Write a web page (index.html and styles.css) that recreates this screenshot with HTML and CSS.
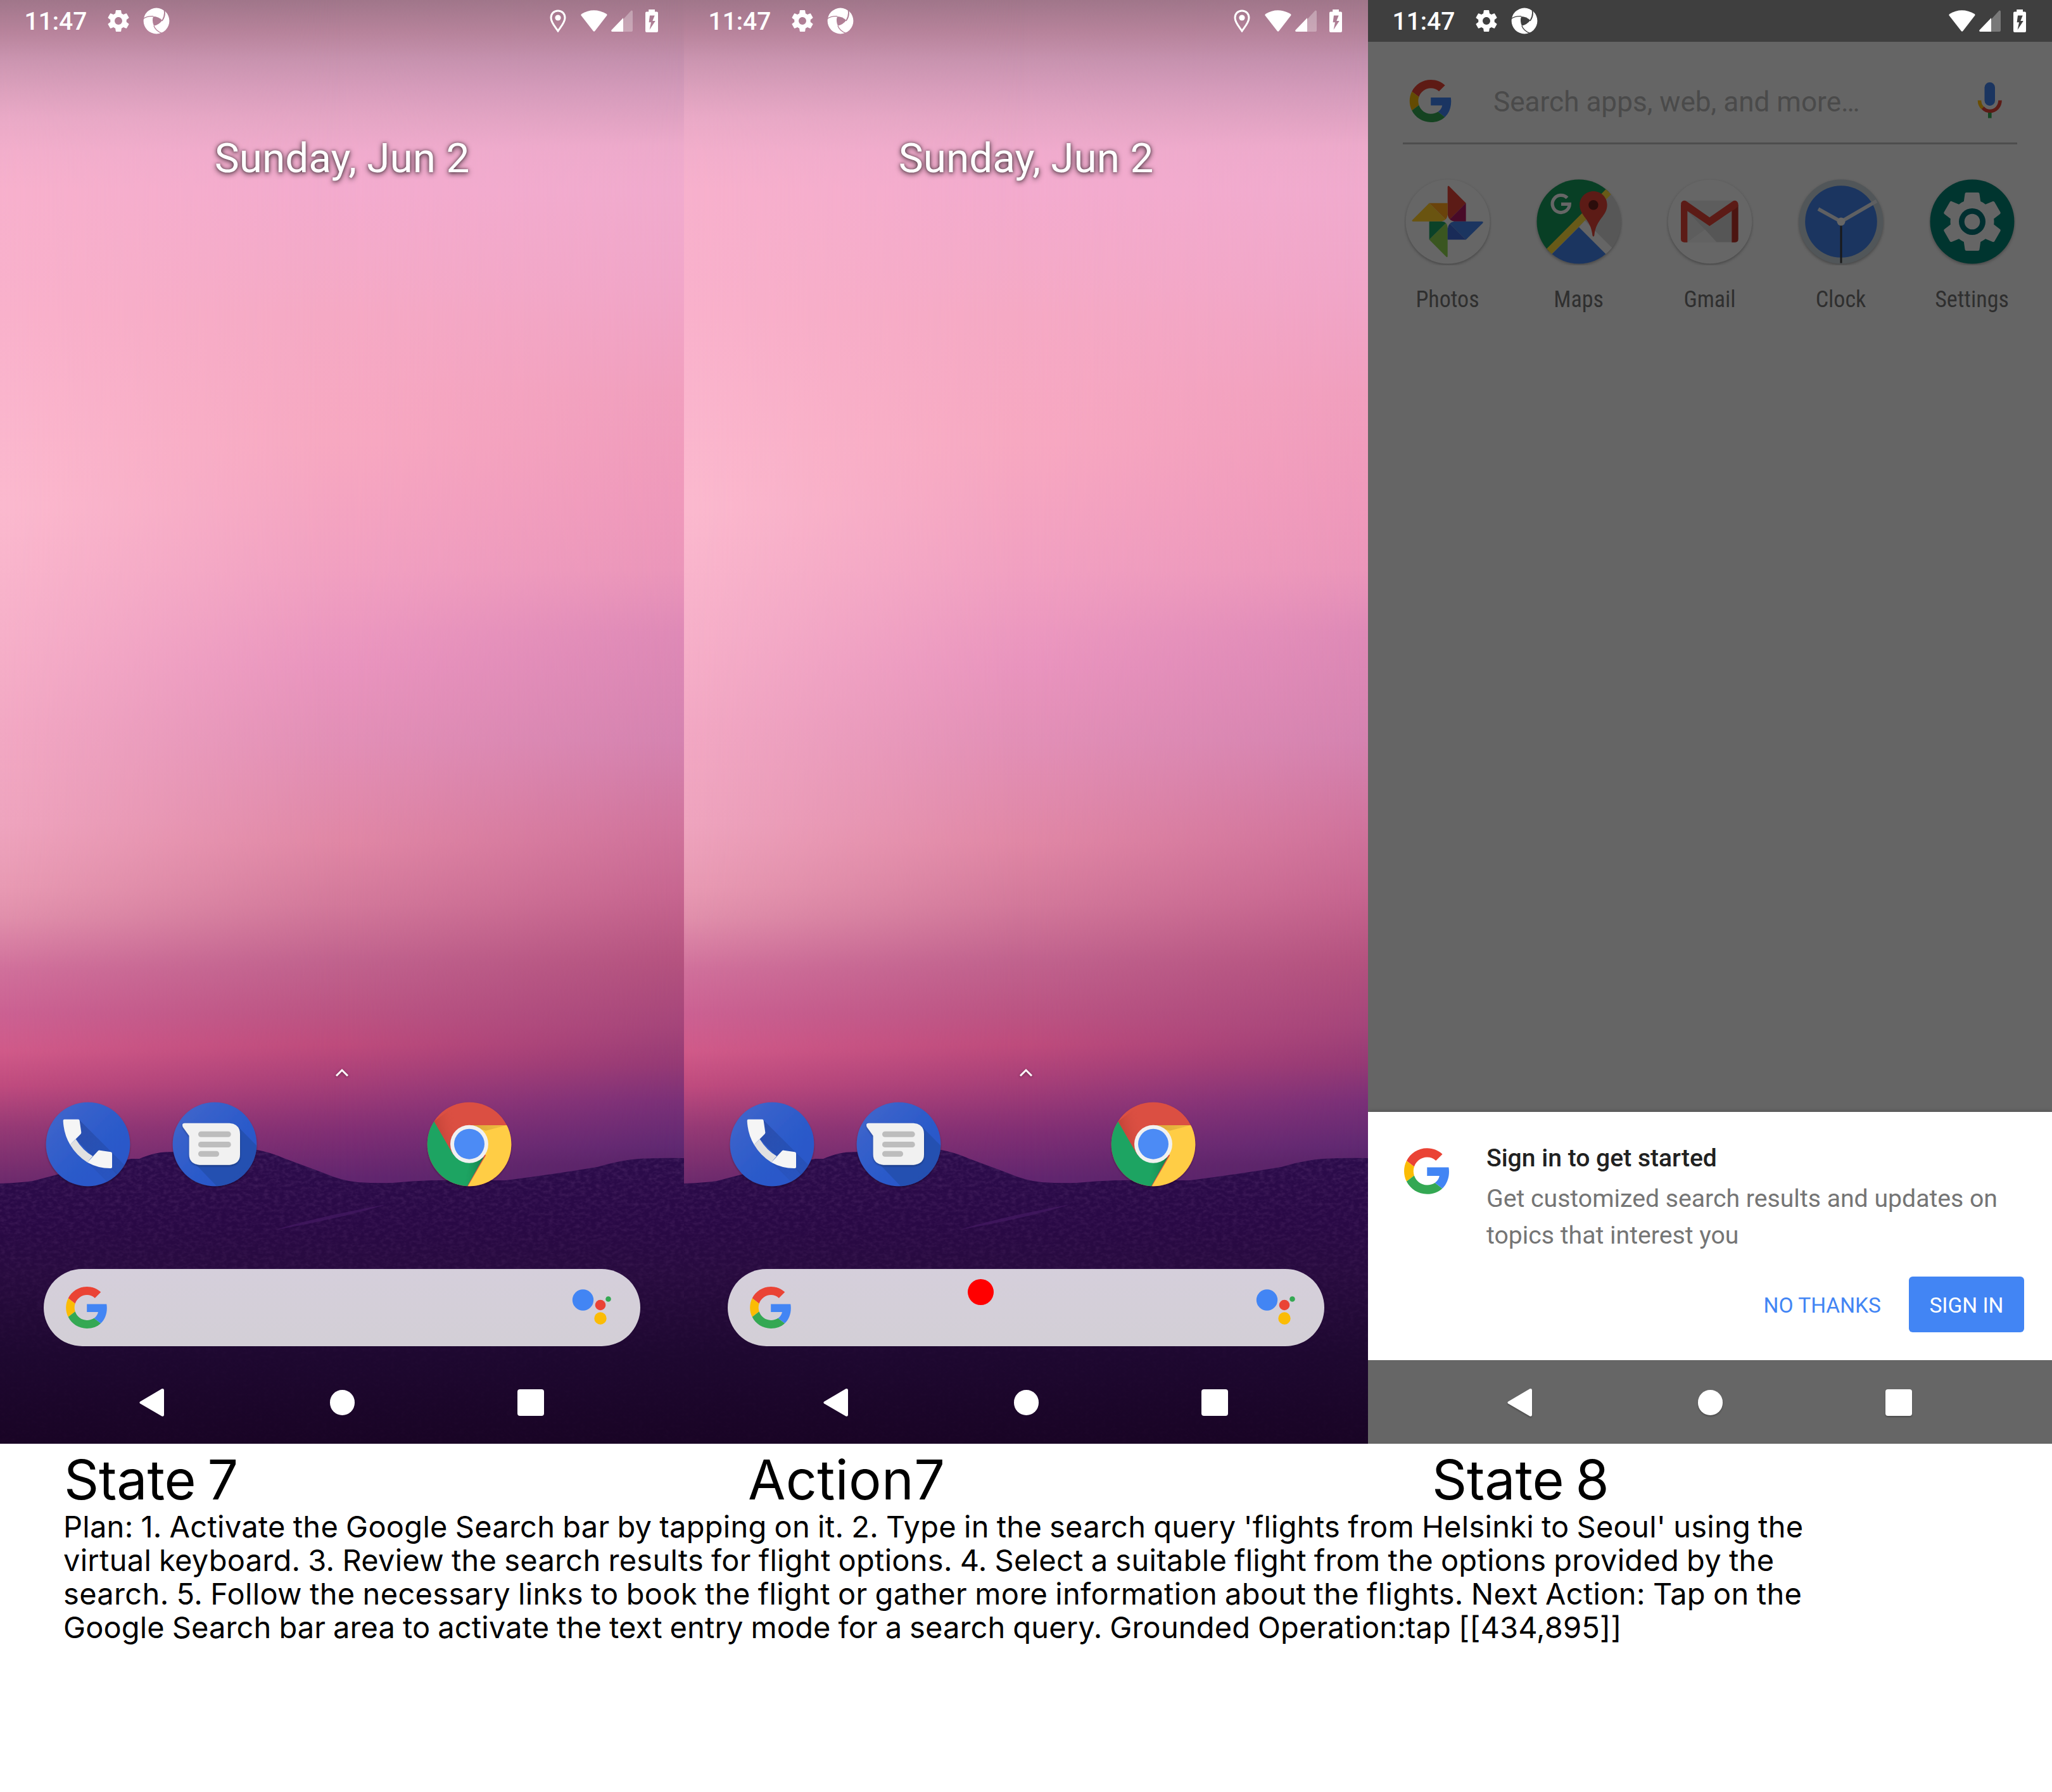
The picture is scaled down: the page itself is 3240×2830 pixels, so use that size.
FILE: index.html
```html
<!DOCTYPE html>
<html lang="en">
<head>
<meta charset="utf-8">
<title>State 7 – State 8</title>
<link rel="stylesheet" href="styles.css">
</head>
<body>
<svg class="defs" width="0" height="0" aria-hidden="true">
  <defs>
    <symbol id="google" viewBox="0 0 47 48">
      <path fill="#EA4335" d="M24 9.5c3.54 0 6.71 1.22 9.21 3.6l6.85-6.85C35.9 2.38 30.47 0 24 0 14.62 0 6.51 5.38 2.56 13.22l7.98 6.19C12.43 13.72 17.74 9.5 24 9.5z"/>
      <path fill="#4285F4" d="M46.98 24.55c0-1.57-.15-3.09-.38-4.55H24v9.02h12.94c-.58 2.96-2.26 5.48-4.78 7.18l7.73 6c4.51-4.18 7.09-10.36 7.09-17.65z"/>
      <path fill="#FBBC05" d="M10.53 28.59c-.48-1.45-.76-2.99-.76-4.59s.27-3.14.76-4.59l-7.98-6.19C.92 16.46 0 20.12 0 24c0 3.88.92 7.54 2.56 10.78l7.97-6.19z"/>
      <path fill="#34A853" d="M24 48c6.48 0 11.93-2.13 15.89-5.81l-7.73-6c-2.15 1.45-4.92 2.3-8.16 2.3-6.26 0-11.57-4.22-13.47-9.91l-7.98 6.19C6.51 42.62 14.62 48 24 48z"/>
    </symbol>
    <symbol id="gear" viewBox="2 2 20 20">
      <path d="M19.43 12.98c.04-.32.07-.64.07-.98s-.03-.66-.07-.98l2.11-1.65c.19-.15.24-.42.12-.64l-2-3.46c-.12-.22-.39-.3-.61-.22l-2.49 1c-.52-.4-1.08-.73-1.69-.98l-.38-2.65C14.46 2.18 14.25 2 14 2h-4c-.25 0-.46.18-.49.42l-.38 2.65c-.61.25-1.17.59-1.69.98l-2.49-1c-.23-.09-.49 0-.61.22l-2 3.46c-.13.22-.07.49.12.64l2.11 1.65c-.04.32-.07.65-.07.98s.03.66.07.98l-2.11 1.65c-.19.15-.24.42-.12.64l2 3.46c.12.22.39.3.61.22l2.49-1c.52.4 1.08.73 1.69.98l.38 2.65c.03.24.24.42.49.42h4c.25 0 .46-.18.49-.42l.38-2.65c.61-.25 1.17-.59 1.69-.98l2.49 1c.23.09.49 0 .61-.22l2-3.46c.12-.22.07-.49-.12-.64l-2.11-1.65zM12 15.5c-1.93 0-3.5-1.57-3.5-3.5s1.57-3.5 3.5-3.5 3.5 1.57 3.5 3.5-1.57 3.5-3.5 3.5z"/>
    </symbol>
    <mask id="swirlCut" maskUnits="userSpaceOnUse" x="-22" y="-22" width="44" height="44">
      <rect x="-22" y="-22" width="44" height="44" fill="#fff"/>
      <path fill="#000" d="M-5-7Q3-7 9.3-1Q4 6-4.1 7.7Q-7.5 0-5-7Z"/>
      <path fill="none" stroke="#000" stroke-width="1.3" d="M-21-3.2Q-15-8-5-7.4M12.2-17Q14-9 9.3-1M9 19.6Q-1 16-4.1 7.7M12.5-17.5Q15-8 9 0"/>
    </mask>
    <symbol id="swirl" viewBox="-21 -21 42 42">
      <circle r="20.4" fill="#fff" mask="url(#swirlCut)"/>
    </symbol>
    <symbol id="pin" viewBox="0 0 26 36">
      <path fill="none" stroke="#fff" stroke-width="3" d="M13 2C6.5 2 2 6.8 2 13c0 8 8 16 11 21 3-5 11-13 11-21C24 6.800 19.500 2 13 2z"/>
      <circle cx="13" cy="13" r="4.600" fill="#fff"/>
    </symbol>
    <symbol id="wifi" viewBox="0 0 42 34">
      <path fill="#fff" d="M.6 8.500Q0 7 1.300 6Q20.500-5.500 40.700 6Q42 7 41.200 8.500L22.500 32.800Q21 34.500 19.500 32.800Z"/>
    </symbol>
    <symbol id="signal" viewBox="0 0 34 34">
      <path fill="#fff" fill-opacity=".3" d="M19 14.500 31.500.7Q34 0 34 2.500V32q0 2-2 2H19z"/>
      <path fill="#fff" d="M19 12.300V34H1.500Q-.5 33.500.5 31.500z"/>
    </symbol>
    <symbol id="battery" viewBox="0 0 20 36">
      <path fill="#fff" fill-rule="evenodd" d="M5.200 0h9.800v3.400h3q2 0 2 2V34q0 2-2 2H2q-2 0-2-2V5.400q0-2 2-2h3.200zM7 9.500 5.600 20.300H9L6.600 32 15.800 18H11.300L14.700 9.500z"/>
    </symbol>
    <symbol id="assistant" viewBox="0 0 64 60">
      <circle cx="17.500" cy="18" r="16.700" fill="#4285F4"/>
      <circle cx="45" cy="26" r="8.300" fill="#EA4335"/>
      <circle cx="57.500" cy="16.500" r="4.300" fill="#34A853"/>
      <circle cx="45" cy="47" r="9.700" fill="#FBBC05"/>
    </symbol>
    <symbol id="navBack" viewBox="0 0 40 46">
      <path fill="#fff" d="M1.200 21.500 35.500 1.200Q39 0 39 3.500V42Q39 45.500 35.500 44.500L1.200 24.500Q-.5 23 1.200 21.500z"/>
    </symbol>

    <linearGradient id="blueDisc" x1="0" y1="0" x2="1" y2="1">
      <stop offset="0" stop-color="#4468cb"/><stop offset=".5" stop-color="#2d5bca"/><stop offset="1" stop-color="#2756c8"/>
    </linearGradient>
    <linearGradient id="longShade" x1="0" y1="0" x2="1" y2="1">
      <stop offset="0" stop-color="#234196" stop-opacity=".55"/><stop offset="1" stop-color="#234da8" stop-opacity=".25"/>
    </linearGradient>
    <filter id="drop" x="-20%" y="-20%" width="140%" height="150%">
      <feDropShadow dx="0" dy="5" stdDeviation="5" flood-color="#000" flood-opacity=".3"/>
    </filter>
    <clipPath id="phoneDisc"><circle cx="230" cy="232" r="199"/></clipPath>
    <clipPath id="msgDisc"><circle cx="832" cy="232" r="199"/></clipPath>
    <clipPath id="chromeDisc"><circle cx="232" cy="232" r="199"/></clipPath>
    <clipPath id="mapDisc"><circle r="66.500"/></clipPath>

    <symbol id="phoneApp" viewBox="23 25 414 414">
      <circle cx="230" cy="232" r="199" fill="url(#blueDisc)" filter="url(#drop)"/>
      <g clip-path="url(#phoneDisc)">
        <path fill="url(#longShade)" d="M190 118 520 448V560L340 345 250 288 172 208 197 182z" />
        <path fill="url(#longShade)" opacity=".5" d="M228 318 400 490 480 480 343 345z"/>
      </g>
      <path fill="#e1e1e1" d="M145 234Q175 285 227 318L252 288Q205 262 172 208z"/>
      <path fill="#f5f5f5" d="M118 114H184Q189 114 190 120L198 176Q198 181 195 184L145 234Q115 185 112 120Q112 114 118 114z"/>
      <path fill="#f5f5f5" d="M278 263Q281 260 286 261L338 269Q344 270 344 276V341Q344 346 338 346Q280 347 227 318z"/>
    </symbol>
    <symbol id="messagesApp" viewBox="625 25 414 414">
      <circle cx="832" cy="232" r="199" fill="url(#blueDisc)" filter="url(#drop)"/>
      <g clip-path="url(#msgDisc)"><path fill="#234da8" opacity=".75" d="M938 145 1060 268V450H860L735 320z"/></g>
      <path fill="#f1f1f1" filter="url(#drop)" d="M690 132H902Q952 136 952 184V280Q952 325 902 330H760Q711 325 711 280V192L681 150Q674 132 690 132z"/>
      <g fill="#bdbdbd"><rect x="754" y="171" width="155" height="27" rx="13"/><rect x="754" y="220" width="155" height="27" rx="13"/><rect x="754" y="264" width="99" height="27" rx="13"/></g>
    </symbol>
    <symbol id="chromeApp" viewBox="25 25 414 414">
      <circle cx="232" cy="232" r="199" fill="#db5043" filter="url(#drop)"/>
      <g clip-path="url(#chromeDisc)">
        <path fill="url(#redShade)" d="M65 124 147 270 160 170 200 142 150 60z"/>
        <path fill="#ffcd45" d="M232 142H440V440H220L310 285z"/>
        <path fill="url(#yellowShade)" d="M232 142H410L310 168z"/>
        <path fill="#1da462" d="M65 124 155 280 232 320 300 293 220 435H20V124z"/>
        <path fill="url(#greenShade)" d="M300 293 220 435 200 440 235 318z"/>
      </g>
      <circle cx="232" cy="231" r="90" fill="#f1f1f1"/>
      <circle cx="232" cy="231" r="72" fill="#4c8bf5"/>
    </symbol>
    <linearGradient id="redShade" x1="0" y1=".6" x2=".8" y2=".3"><stop offset="0" stop-color="#b03a30" stop-opacity=".75"/><stop offset="1" stop-color="#db5043" stop-opacity="0"/></linearGradient>
    <linearGradient id="yellowShade"><stop offset="0" stop-color="#d9a63a"/><stop offset="1" stop-color="#f2c040"/></linearGradient>
    <linearGradient id="greenShade"><stop offset="0" stop-color="#1da462" stop-opacity="0"/><stop offset="1" stop-color="#127a48"/></linearGradient>
    <filter id="grain" x="0" y="0" width="100%" height="100%">
      <feTurbulence type="fractalNoise" baseFrequency=".12 .2" numOctaves="3" seed="4"/>
      <feColorMatrix values="0 0 0 0 .32  0 0 0 0 .14  0 0 0 0 .38  1.600 0 0 0 -.62"/>
      <feComposite in2="SourceGraphic" operator="in"/>
    </filter>
    <linearGradient id="hillFill" x1="0" y1="1815" x2="0" y2="2280" gradientUnits="userSpaceOnUse">
      <stop offset="0" stop-color="#2c0c4c"/><stop offset=".25" stop-color="#290945"/><stop offset=".42" stop-color="#280b3f"/>
      <stop offset=".7" stop-color="#1e0830"/><stop offset="1" stop-color="#190425"/>
    </linearGradient>
    <linearGradient id="grainFade" x1="0" y1="1815" x2="0" y2="2150" gradientUnits="userSpaceOnUse">
      <stop offset="0" stop-color="#fff"/><stop offset=".45" stop-color="#fff" stop-opacity=".6"/><stop offset="1" stop-color="#fff" stop-opacity=".1"/>
    </linearGradient>
    <symbol id="hills" viewBox="0 1800 1080 480">
      <path fill="url(#hillFill)" d="M0 1869Q30 1868 52 1865Q75 1859 90 1855L207 1830H220Q236 1823 251 1820.500Q260 1819 272 1819Q340 1812 406 1816Q428 1820 448 1829L510 1852Q540 1865 565 1867Q595 1869 620 1868Q650 1865 682 1864L799 1864Q870 1855 943 1843Q980 1832 1009 1830Q1045 1828 1080 1829V2280H0z"/>
      <path fill="url(#grainFade)" filter="url(#grain)" opacity=".26" d="M0 1869Q30 1868 52 1865Q75 1859 90 1855L207 1830H220Q236 1823 251 1820.500Q260 1819 272 1819Q340 1812 406 1816Q428 1820 448 1829L510 1852Q540 1865 565 1867Q595 1869 620 1868Q650 1865 682 1864L799 1864Q870 1855 943 1843Q980 1832 1009 1830Q1045 1828 1080 1829V2280H0z"/>
      <path fill="#451a63" opacity=".7" d="M435 1942Q500 1922 610 1902Q540 1924 435 1942z"/>
    </symbol>
  </defs>
</svg>

<main class="sheet">
  <section class="screens">
    <article class="phone home">
      <div class="sky sky-right"></div><div class="sky sky-mid"></div><div class="sky sky-left"></div>
      <svg class="hills"><use href="#hills"/></svg>
      <div class="ui">
        <header class="status">
          <span class="time">11:47</span>
          <svg class="s-gear"><use href="#gear"/></svg>
          <svg class="s-swirl"><use href="#swirl"/></svg>
          <span class="grow"></span>
          <svg class="s-pin"><use href="#pin"/></svg>
          <svg class="s-wifi"><use href="#wifi"/></svg>
          <svg class="s-signal"><use href="#signal"/></svg>
          <svg class="s-battery"><use href="#battery"/></svg>
        </header>
        <div class="date">Sunday, Jun 2</div>
        <svg class="chevron" viewBox="0 0 22 14"><path d="M2 12 11 3l9 9"/></svg>
        <div class="hotseat">
          <svg class="app"><use href="#phoneApp"/></svg>
          <svg class="app"><use href="#messagesApp"/></svg>
          <span></span>
          <svg class="app"><use href="#chromeApp"/></svg>
          <span></span>
        </div>
        <div class="pill">
          <svg class="pill-g"><use href="#google"/></svg>
          <svg class="pill-assistant"><use href="#assistant"/></svg>
        </div>
        <nav class="nav">
          <svg class="nav-back"><use href="#navBack"/></svg><i class="nav-home"></i><i class="nav-recent"></i>
        </nav>
      </div>
    </article>

    <article class="phone home">
      <div class="sky sky-right"></div><div class="sky sky-mid"></div><div class="sky sky-left"></div>
      <svg class="hills"><use href="#hills"/></svg>
      <div class="ui">
        <header class="status">
          <span class="time">11:47</span>
          <svg class="s-gear"><use href="#gear"/></svg>
          <svg class="s-swirl"><use href="#swirl"/></svg>
          <span class="grow"></span>
          <svg class="s-pin"><use href="#pin"/></svg>
          <svg class="s-wifi"><use href="#wifi"/></svg>
          <svg class="s-signal"><use href="#signal"/></svg>
          <svg class="s-battery"><use href="#battery"/></svg>
        </header>
        <div class="date">Sunday, Jun 2</div>
        <svg class="chevron" viewBox="0 0 22 14"><path d="M2 12 11 3l9 9"/></svg>
        <div class="hotseat">
          <svg class="app"><use href="#phoneApp"/></svg>
          <svg class="app"><use href="#messagesApp"/></svg>
          <span></span>
          <svg class="app"><use href="#chromeApp"/></svg>
          <span></span>
        </div>
        <div class="pill">
          <svg class="pill-g"><use href="#google"/></svg>
          <svg class="pill-assistant"><use href="#assistant"/></svg>
        </div>
        <nav class="nav">
          <svg class="nav-back"><use href="#navBack"/></svg><i class="nav-home"></i><i class="nav-recent"></i>
        </nav>
      </div>
      <i class="tap"></i>
    </article>

    <article class="phone search">
      <header class="status">
        <span class="time">11:47</span>
        <svg class="s-gear"><use href="#gear"/></svg>
        <svg class="s-swirl"><use href="#swirl"/></svg>
        <span class="grow"></span>
        <svg class="s-wifi"><use href="#wifi"/></svg>
        <svg class="s-signal"><use href="#signal"/></svg>
        <svg class="s-battery"><use href="#battery"/></svg>
      </header>
      <div class="searchbar">
        <svg class="search-g"><use href="#google"/></svg>
        <span class="placeholder">Search apps, web, and more…</span>
        <svg class="mic" viewBox="0 0 40 58">
          <rect x="11.500" y="1" width="16.500" height="37" rx="8.200" fill="#1b3560"/>
          <path fill="none" stroke="#5c1b16" stroke-width="5.600" d="M36 29.500C36 39 29 46.500 20 46.500 15.500 46.500 11.500 44.500 8.500 41"/>
          <path fill="none" stroke="#6a4e04" stroke-width="5.600" d="M3.500 29.500Q3.500 37 8.500 41.500"/>
          <path fill="#164522" d="M17 49h5.600v8.500H17z"/>
        </svg>
      </div>
      <div class="apps">
        <div class="app-cell">
          <svg class="app" viewBox="-69 -69 138 138">
            <circle class="disc" r="66.500" fill="#666"/>
            <path fill="#5c1b16" d="M-.3-54.500Q0-58 2.500-55.500L28.600-29.300-.3-.3z"/>
            <path fill="#480a28" d="M28.600-29.300V-.3H-.3z"/>
            <path fill="#6a430b" d="M-29.300-29.300H-.3V-.3z"/>
            <path fill="#6a5410" d="M-54.500-.3Q-58-.5-55.500-3L-29.300-29.300-.3-.3z"/>
            <path fill="#0b4228" d="M-29.300-.3H-.3L-29.300 28.500z"/>
            <path fill="#3a5620" d="M-.3-.3V54.500Q-.6 57.500-3 55L-29.300 28.500z"/>
            <path fill="#1b3560" d="M-.3-.3H54Q57 0 55 2.500L28.600 28.500z"/>
            <path fill="#192b58" d="M-.3-.3V28.500H28.600z"/>
            <path fill="#666" d="M-.3-11Q1-2 10-.3 1 1 0 11-1-1-10-.3-1-2-.3-11z"/>
          </svg>
          <span>Photos</span>
        </div>
        <div class="app-cell">
          <svg class="app" viewBox="-69 -69 138 138">
            <circle class="disc" r="66.500" fill="#575757"/>
            <g clip-path="url(#mapDisc)">
              <path fill="#083f25" d="M-70-70H70L-70 70z"/>
              <path fill="#656565" d="M0 9 9-2 62 51 43 60z"/>
              <path fill="#1b3560" d="M0 8.700-60 68.700H60z"/>
              <path stroke="#685a18" stroke-width="11.500" d="M56-56.500-56 56"/>
            </g>
            <path fill="none" stroke="#666" stroke-width="5.300" d="M-18.500-37.500A13.600 13.600 0 1 0-14.700-27.700H-28"/>
            <path fill="#5c1b16" d="M22.900-48C11-48 1.200-38.500 1.200-26.500 1.200-8 19-5 21.500 22Q22.900 25 24.300 22C27-5 44.600-8 44.600-26.500 44.600-38.500 35-48 22.900-48z"/>
            <circle cx="22.900" cy="-26.300" r="7.700" fill="#2b0d0b"/>
          </svg>
          <span>Maps</span>
        </div>
        <div class="app-cell">
          <svg class="app" viewBox="32 31 414 414">
            <circle class="disc wide" cx="239" cy="238" r="199" fill="#666"/>
            <path fill="#5d5d5d" d="M118 138H356V335H118z"/>
            <path fill="#545454" d="M132 188 270 335H342V190L237 260z" opacity=".7"/>
            <path fill="#626262" d="M132 335 215 275 270 335z"/>
            <path fill="#5c1b16" d="M101 160H132V336H118Q101 336 101 320z"/>
            <path fill="#4c1511" d="M342 160H373V320Q373 336 358 336H342z"/>
            <path fill="#5c1b16" d="M102 164Q98 145 112 139 120 136 128 142L237 218 346 142Q354 136 362 139 376 147 372 164 370 172 342 188L237 259 132 188Q106 174 102 164z"/>
          </svg>
          <span>Gmail</span>
        </div>
        <div class="app-cell">
          <svg class="app" viewBox="-69 -69 138 138">
            <circle class="disc" r="66.500" fill="#515659"/>
            <circle r="56.800" fill="#1b3560"/>
            <path fill="none" stroke="#5f6062" stroke-width="5.600" d="M-36-20 0 0 56-32.500"/>
            <path stroke="#191919" stroke-width="3" d="M0 0V65.500"/>
            <circle r="6.500" fill="#666"/>
          </svg>
          <span>Clock</span>
        </div>
        <div class="app-cell">
          <svg class="app" viewBox="-69 -69 138 138">
            <circle class="disc" r="66.500" fill="#00352f"/>
            <use href="#gear" x="-46" y="-46" width="92" height="92" fill="#656565"/>
            <circle r="26" fill="#656565"/><circle r="21" fill="#002f30"/><circle r="12.300" fill="#656565"/>
          </svg>
          <span>Settings</span>
        </div>
      </div>
      <section class="dialog">
        <svg class="dialog-g"><use href="#google"/></svg>
        <div class="dialog-body">
          <h2>Sign in to get started</h2>
          <p>Get customized search results and updates on<br>topics that interest you</p>
          <div class="actions">
            <span class="no">NO THANKS</span>
            <span class="yes">SIGN IN</span>
          </div>
        </div>
      </section>
      <nav class="nav">
        <svg class="nav-back"><use href="#navBack"/></svg><i class="nav-home"></i><i class="nav-recent"></i>
      </nav>
    </article>
  </section>

  <section class="notes">
    <div class="titles"><h1 class="spaced">State 7</h1><h1>Action7</h1><h1 class="spaced">State 8</h1></div>
    <p class="plan">
      <span class="l1">Plan: 1. Activate the Google Search bar by tapping on it. 2. Type in the search query 'flights from Helsinki to Seoul' using the</span>
      <span class="l2">virtual keyboard. 3. Review the search results for flight options. 4. Select a suitable flight from the options provided by the</span>
      <span class="l3">search. 5. Follow the necessary links to book the flight or gather more information about the flights. Next Action: Tap on the</span>
      <span class="l4">Google Search bar area to activate the text entry mode for a search query. Grounded Operation:tap [[434,895]]</span>
    </p>
  </section>
</main>
</body>
</html>
```
FILE: styles.css
```css
* { box-sizing: border-box; margin: 0; padding: 0; }
body { background: #fff; font-family: Roboto, "Liberation Sans", sans-serif; }
svg { display: block; flex: none; }
.defs { position: absolute; }
.sheet { width: 3240px; height: 2830px; overflow: hidden; }
.screens { display: grid; grid-template-columns: repeat(3, 1080px); height: 2280px; }
.phone { position: relative; width: 1080px; height: 2280px; overflow: hidden; }

/* wallpaper: three vertical ramps blended from left to right */
.sky { position: absolute; inset: 0; }
.sky-left {
  background: linear-gradient(#a0768a 0, #b7839b 50px, #cb95b0 95px, #dba0bc 140px, #e9a9c6 185px, #f2aecb 240px, #f7b0cc 300px, #f9b1cb 500px, #fbb9ce 800px, #f6b0c9 1000px, #f2a8c3 1150px, #eea4be 1300px, #e89ab3 1400px, #e08fab 1450px, #d0709b 1530px, #cb6192 1600px, #d05a89 1660px, #bf4b7e 1715px, #963a75 1780px, #6c2a6c 1869px);
  mask-image: linear-gradient(to right, #000, transparent 50%);
}
.sky-mid {
  background: linear-gradient(#a0768a 0, #b7839b 50px, #c893af 95px, #d79cbb 140px, #e4a5c4 185px, #f0abcd 240px, #f3abce 300px, #f5a9c4 500px, #f7a8c1 700px, #f1a0c1 900px, #e994be 1050px, #e28fb6 1170px, #e087a5 1330px, #d2789a 1430px, #c0628d 1520px, #bb5483 1600px, #be4b7c 1650px, #a63f78 1710px, #822f74 1785px, #62266f 1860px);
  mask-image: linear-gradient(to right, #000 50%, transparent);
}
.sky-right {
  background: linear-gradient(#a0768a 0, #b4829a 50px, #c490ae 95px, #d39aba 140px, #e0a2c2 185px, #edaacb 230px, #f1abce 300px, #f1a6c9 450px, #f19fbe 620px, #ef99bb 800px, #eb96ba 900px, #df8ab7 1000px, #d583b0 1170px, #d0739c 1310px, #c76690 1410px, #b4527f 1520px, #a5457a 1620px, #953a75 1680px, #7a3078 1740px, #602972 1810px, #572468 1840px);
}
.hills { position: absolute; left: 0; bottom: 0; width: 1080px; height: 480px; }
.ui { position: relative; height: 2280px; display: flex; flex-direction: column; }

.status { height: 66px; flex: none; display: flex; align-items: center; padding: 0 41px 0 38.500px; }
.time { color: #fff; font-weight: 500; font-size: 39px; line-height: 66px; width: 131px; padding-top: 2px; white-space: nowrap; }
.grow { flex: 1; }
.s-gear { width: 34px; height: 36px; fill: #fff; }
.s-swirl { width: 42px; height: 42px; margin-left: 22px; }
.s-pin { width: 26px; height: 36px; margin-right: 23px; }
.s-wifi { width: 42px; height: 34px; margin-right: 6.500px; }
.s-signal { width: 34px; height: 34px; margin-right: 20px; }
.s-battery { width: 20px; height: 36px; }

.date { margin-top: 145px; height: 78px; line-height: 78px; text-align: center; color: #fff; font-size: 65.700px; text-shadow: 0 2px 9px rgba(0,0,0,.75), 0 0 4px rgba(0,0,0,.4); }
.chevron { width: 22px; height: 14px; margin: 1398px auto 0; filter: drop-shadow(0 1px 2px rgba(0,0,0,.4)); }
.chevron path { fill: none; stroke: #fff; stroke-width: 3; }
.hotseat { margin-top: 37px; padding: 0 38.300px; display: grid; grid-template-columns: repeat(5, 1fr); justify-items: center; height: 138px; }
.app { width: 138px; height: 138px; }
.pill { margin: 128px 69px 0; height: 122px; border-radius: 61px; background: linear-gradient(#d5cfdb, #d3cfd6); display: flex; align-items: center; padding: 0 44px 0 35px; justify-content: space-between; }
.pill-g { width: 65px; height: 66px; }
.pill-assistant { width: 64px; height: 60px; }
.nav { height: 130px; margin-top: auto; display: flex; align-items: center; padding: 0 221px 0 220px; justify-content: space-between; }
.nav-back { width: 40px; height: 46px; }
.nav-home { width: 39.500px; height: 39.500px; border-radius: 50%; background: #fff; margin-left: 3.500px; }
.nav-recent { width: 42px; height: 42px; border-radius: 4px; background: #fff; }
.tap { position: absolute; left: 447.500px; top: 2020px; width: 41px; height: 41px; border-radius: 50%; background: #f00; }

.search { background: #656565; display: flex; flex-direction: column; }
.search .status { background: #3f3f3f; }
.searchbar { margin: 0 55px; height: 162px; border-bottom: 3px solid #4d4d4d; display: flex; align-items: center; padding: 0 8px 0 10px; }
.search-g { width: 67px; height: 67px; filter: brightness(.4); margin-top: 27px; }
.placeholder { flex: 1; margin: 30px 0 0 66px; font-size: 44.100px; color: #4a4a4a; white-space: nowrap; }
.mic { width: 40px; height: 58px; margin: 25px 15px 0 0; }
.apps { display: grid; grid-template-columns: repeat(5, 207px); margin: 53px 0 0 22px; }
.app-cell { display: flex; flex-direction: column; align-items: center; }
.disc { filter: drop-shadow(0 2px 2px rgba(0,0,0,.3)); }
.disc.wide { filter: drop-shadow(0 6px 6px rgba(0,0,0,.3)); }
.app-cell span { font-family: "Roboto Condensed", Roboto, sans-serif; font-size: 36px; line-height: 42px; margin-top: 33px; color: #2f2f2f; }

.dialog { margin-top: auto; height: 392px; background: #fff; display: flex; padding: 57px 44px 0 57px; box-shadow: 0 -2px 6px rgba(0,0,0,.15), 0 2px 2px rgba(0,0,0,.15); }
.dialog-g { width: 71px; height: 73px; }
.dialog-body { flex: 1; margin: -6px 0 0 59px; }
.dialog h2 { font-size: 39.100px; font-weight: 500; line-height: 44px; color: #212121; }
.dialog p { font-size: 39.200px; line-height: 58px; color: #757575; margin-top: 13px; white-space: nowrap; }
.actions { display: flex; justify-content: flex-end; align-items: center; margin-top: 36px; font-size: 33.500px; }
.no { color: #4285f4; margin: 3px 44px 0 0; }
.yes { width: 182px; height: 88px; line-height: 92px; border-radius: 6px; background: #4285f4; color: #fff; text-align: center; }
.search .nav { height: 132px; margin-top: 0; padding-top: 2px; background: #666; }
.search .nav > * { filter: drop-shadow(0 2px 1px rgba(0,0,0,.25)); }

.notes { font-family: Inter, "Liberation Sans", sans-serif; color: #000; }
.titles { display: grid; grid-template-columns: repeat(3, 1080px); padding-left: 101px; height: 104px; }
h1 { font-size: 86px; font-weight: 400; line-height: 114px; white-space: nowrap; letter-spacing: .4px; }
h1.spaced { word-spacing: -6px; letter-spacing: -.2px; }
.plan { font-size: 47px; line-height: 53px; padding-left: 100px; word-spacing: -1.500px; }
.plan span { display: block; white-space: nowrap; }
.l1, .l2 { letter-spacing: .27px; }
.l3 { letter-spacing: .34px; }
.l4 { letter-spacing: .14px; }
```
